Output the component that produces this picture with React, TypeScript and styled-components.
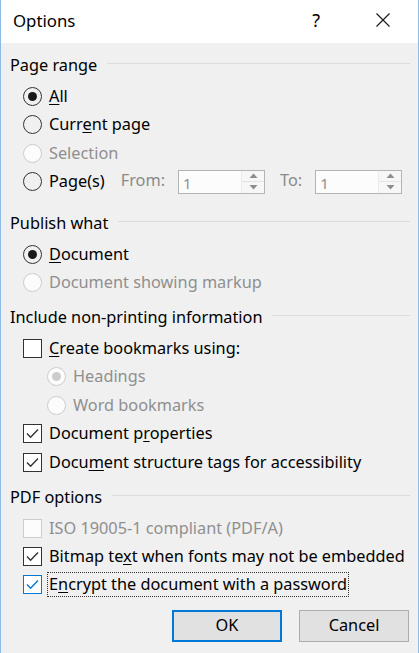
import React from 'react'
import styled, { createGlobalStyle } from 'styled-components'

const GlobalStyle = createGlobalStyle`
  html, body {
    margin: 0;
    padding: 0;
    background: #f0f0f0;
  }
  body {
    font-family: 'Noto Sans', 'Open Sans', sans-serif;
    font-size: 16.3px;
    color: #000;
  }
`

type RadioProps = { checked?: boolean; disabled?: boolean }

const Radio = ({ checked, disabled }: RadioProps) => (
  <StyledRadio $disabled={disabled}>{checked && <StyledDot $disabled={disabled} />}</StyledRadio>
)

const Checkbox = ({ checked, disabled, focus }: { checked?: boolean; disabled?: boolean; focus?: boolean }) => (
  <StyledCheck $disabled={disabled} $focus={focus}>
    {checked && (
      <svg width="15" height="15" viewBox="0 0 15 15">
        <path d="M2 7.6 L5.6 11.3 L13 3.6" fill="none" stroke={focus ? '#0078d7' : '#333'} strokeWidth="1.4" />
      </svg>
    )}
  </StyledCheck>
)

const SpinBox = () => (
  <StyledSpin>
    <StyledSpinField>1</StyledSpinField>
    <StyledSpinButtons>
      <StyledSpinHalf>
        <svg width="9" height="5" viewBox="0 0 9 5">
          <path d="M0.5 5 L4.5 0.5 L8.5 5 Z" fill="#8e8e8e" />
        </svg>
      </StyledSpinHalf>
      <StyledSpinHalf>
        <svg width="9" height="5" viewBox="0 0 9 5">
          <path d="M0.5 0 L4.5 4.5 L8.5 0 Z" fill="#8e8e8e" />
        </svg>
      </StyledSpinHalf>
    </StyledSpinButtons>
  </StyledSpin>
)

const Heading = ({ children }: { children: React.ReactNode }) => (
  <StyledHeading>
    <span>{children}</span>
    <StyledRule />
  </StyledHeading>
)

export default function App() {
  return (
    <>
      <GlobalStyle />
      <StyledWindow>
        <StyledTitleBar>
          <StyledTitle>Options</StyledTitle>
          <StyledHelp>?</StyledHelp>
          <StyledClose>
            <svg width="16" height="16" viewBox="0 0 16 16">
              <path d="M1.5 1.5 L14.5 14.5 M14.5 1.5 L1.5 14.5" stroke="#1a1a1a" strokeWidth="1.2" />
            </svg>
          </StyledClose>
        </StyledTitleBar>

        <StyledBody>
          <StyledSection $extra={6.5}>
            <Heading>Page range</Heading>
            <StyledRows>
              <StyledRow>
                <Radio checked />
                <StyledLabel><u>A</u>ll</StyledLabel>
              </StyledRow>
              <StyledRow>
                <Radio />
                <StyledLabel>Curr<u>e</u>nt page</StyledLabel>
              </StyledRow>
              <StyledRow>
                <Radio disabled />
                <StyledLabel $disabled>Selection</StyledLabel>
              </StyledRow>
              <StyledRow>
                <Radio />
                <StyledLabel>Pa<u>g</u>e(s)</StyledLabel>
                <StyledRangeLabel $before={15} $after={13}>From:</StyledRangeLabel>
                <SpinBox />
                <StyledRangeLabel $before={15} $after={13}>To:</StyledRangeLabel>
                <SpinBox />
              </StyledRow>
            </StyledRows>
          </StyledSection>

          <StyledSection>
            <Heading>Publish what</Heading>
            <StyledRows>
              <StyledRow>
                <Radio checked />
                <StyledLabel><u>D</u>ocument</StyledLabel>
              </StyledRow>
              <StyledRow>
                <Radio disabled />
                <StyledLabel $disabled>Document showing markup</StyledLabel>
              </StyledRow>
            </StyledRows>
          </StyledSection>

          <StyledSection>
            <Heading>Include non-printing information</Heading>
            <StyledRows>
              <StyledRow>
                <Checkbox />
                <StyledLabel><u>C</u>reate bookmarks using:</StyledLabel>
              </StyledRow>
              <StyledRow $indent>
                <Radio checked disabled />
                <StyledLabel $disabled>Headings</StyledLabel>
              </StyledRow>
              <StyledRow $indent>
                <Radio disabled />
                <StyledLabel $disabled>Word bookmarks</StyledLabel>
              </StyledRow>
              <StyledRow>
                <Checkbox checked />
                <StyledLabel>Document p<u>r</u>operties</StyledLabel>
              </StyledRow>
              <StyledRow>
                <Checkbox checked />
                <StyledLabel>Docu<u>m</u>ent structure tags for accessibility</StyledLabel>
              </StyledRow>
            </StyledRows>
          </StyledSection>

          <StyledSection>
            <Heading>PDF options</Heading>
            <StyledRows>
              <StyledRow>
                <Checkbox disabled />
                <StyledLabel $disabled>ISO 19005-1 compliant (PDF/A)</StyledLabel>
              </StyledRow>
              <StyledRow>
                <Checkbox checked />
                <StyledLabel>Bitmap te<u>x</u>t when fonts may not be embedded</StyledLabel>
              </StyledRow>
              <StyledRow>
                <Checkbox checked focus />
                <StyledLabel $focus>E<u>n</u>crypt the document with a password</StyledLabel>
              </StyledRow>
            </StyledRows>
          </StyledSection>

          <StyledFooter>
            <StyledButton $primary>OK</StyledButton>
            <StyledButton>Cancel</StyledButton>
          </StyledFooter>
        </StyledBody>
      </StyledWindow>
    </>
  )
}

const StyledWindow = styled.div`
  width: 419px;
  height: 653px;
  box-sizing: border-box;
  border-left: 1px solid #8cbbe6;
  border-right: 1px solid #8cbbe6;
  background: #f0f0f0;
  display: flex;
  flex-direction: column;
`
const StyledTitleBar = styled.div`
  height: 43px;
  background: #fff;
  display: flex;
  align-items: center;
  padding-left: 12px;
`
const StyledTitle = styled.div`
  flex: 1;
  font-size: 16.8px;
  margin-top: -3px;
`
const StyledHelp = styled.div`
  font-size: 18px;
  margin-right: 55px;
  margin-top: -4px;
`
const StyledClose = styled.div`
  display: flex;
  margin-right: 27px;
  margin-top: -4px;
`
const StyledBody = styled.div`
  padding: 11px 8px 0 9px;
  display: flex;
  flex-direction: column;
`
const StyledSection = styled.div<{ $extra?: number }>`
  display: flex;
  flex-direction: column;
  margin-bottom: ${({ $extra }) => 9.3 + ($extra || 0)}px;
`
const StyledHeading = styled.div`
  height: 22px;
  display: flex;
  align-items: center;
  gap: 10px;
  line-height: 22px;
  white-space: nowrap;
`
const StyledRule = styled.div`
  flex: 1;
  height: 1px;
  background: #dcdcdc;
  margin-top: -3px;
`
const StyledRows = styled.div`
  display: flex;
  flex-direction: column;
  padding-top: 6.3px;
`
const StyledRow = styled.div<{ $indent?: boolean }>`
  height: 28.4px;
  display: flex;
  align-items: center;
  padding-left: ${({ $indent }) => ($indent ? 37 : 13)}px;
  white-space: nowrap;
`
const StyledRadio = styled.div<{ $disabled?: boolean }>`
  width: 19px;
  height: 19px;
  box-sizing: border-box;
  border-radius: 50%;
  border: 1.5px solid ${({ $disabled }) => ($disabled ? '#cccccc' : '#333333')};
  background: ${({ $disabled }) => ($disabled ? '#fcfcfc' : 'transparent')};
  display: flex;
  align-items: center;
  justify-content: center;
  flex-shrink: 0;
`
const StyledDot = styled.div<{ $disabled?: boolean }>`
  width: 9px;
  height: 9px;
  border-radius: 50%;
  background: ${({ $disabled }) => ($disabled ? '#cccccc' : '#1a1a1a')};
`
const StyledCheck = styled.div<{ $disabled?: boolean; $focus?: boolean }>`
  width: 19px;
  height: 19px;
  box-sizing: border-box;
  border: 1.3px solid
    ${({ $disabled, $focus }) => ($disabled ? '#cccccc' : $focus ? '#0078d7' : '#333333')};
  background: ${({ $disabled }) => ($disabled ? '#fcfcfc' : '#fff')};
  display: flex;
  align-items: center;
  justify-content: center;
  flex-shrink: 0;
`
const StyledLabel = styled.span<{ $disabled?: boolean; $focus?: boolean }>`
  margin-left: 6px;
  padding: 0 1px 1px 1px;
  color: ${({ $disabled }) => ($disabled ? '#8f8f8f' : '#000')};
  outline: ${({ $focus }) => ($focus ? '1px dotted #333' : 'none')};
  outline-offset: 0;
  line-height: 22px;
  u {
    text-underline-offset: 2px;
  }
`
const StyledRangeLabel = styled.span<{ $before: number; $after: number }>`
  color: #8a8a8a;
  margin-left: ${({ $before }) => $before}px;
  margin-right: ${({ $after }) => $after}px;
  margin-top: -3px;
`
const StyledSpin = styled.div`
  width: 87px;
  height: 24px;
  box-sizing: border-box;
  border: 1px solid #b4b4b4;
  background: #f7f7f7;
  display: flex;
`
const StyledSpinField = styled.div`
  flex: 1;
  background: #fcfcfc;
  color: #8f8f8f;
  padding-left: 4px;
  line-height: 24px;
  font-size: 15px;
`
const StyledSpinButtons = styled.div`
  width: 22px;
  display: flex;
  flex-direction: column;
  border-left: 1px solid #ececec;
`
const StyledSpinHalf = styled.div`
  flex: 1;
  display: flex;
  align-items: center;
  justify-content: center;
  & + & {
    border-top: 1px solid #e4e4e4;
  }
`
const StyledFooter = styled.div`
  display: flex;
  justify-content: flex-end;
  gap: 17px;
  padding-top: 1.5px;
  padding-right: 1px;
`
const StyledButton = styled.button<{ $primary?: boolean }>`
  width: 110px;
  height: 32px;
  box-sizing: border-box;
  font-family: inherit;
  font-size: 16.3px;
  color: #000;
  background: #e1e1e1;
  border: ${({ $primary }) => ($primary ? '2px solid #0078d7' : '1px solid #adadad')};
  padding: 0 0 2px;
  margin: 0;
`
